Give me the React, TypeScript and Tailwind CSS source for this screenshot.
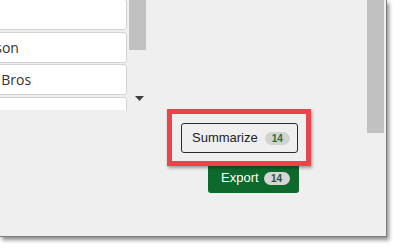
import React from 'react';

const rows = ['', 'Thompson', 'Warner Bros', ''];

export default function App() {
  return (
    <div className="w-[401px] h-[252px] bg-white overflow-hidden relative font-['Liberation_Sans',Arial,sans-serif]">
      {/* Dialog panel */}
      <div className="w-[387px] h-[237px] bg-[#efefef] border-r border-b border-[#7d7d7d] shadow-[2px_3px_4px_rgba(0,0,0,0.45)] flex">
        {/* List + its scrollbar */}
        <div className="flex h-[110px] w-[150px]">
          <div className="w-[127px] h-[110px] overflow-hidden">
            <div className="-ml-[10px] -mt-[1px] flex flex-col gap-[1.5px]">
              {rows.map((r, i) => (
                <div
                  key={i}
                  className="w-[137px] h-[31px] shrink-0 bg-white border border-[#d3d3d3] rounded-[3px] flex items-center overflow-hidden"
                >
                  <span className="ml-[-42px] whitespace-nowrap text-[14px] text-[#333] font-['Open_Sans',sans-serif]">
                    {r}
                  </span>
                </div>
              ))}
            </div>
          </div>
          <div className="w-[2px]" />
          <div className="w-[17px] h-[104px] flex flex-col justify-between items-center">
            <div className="w-[17px] h-[50px] bg-[#c1c1c1]" />
            <svg width="9" height="5" viewBox="0 0 9 5" className="mb-[3px] ml-[3px]">
              <path d="M0 0 L9 0 L4.5 5 Z" fill="#404040" />
            </svg>
          </div>
        </div>

        {/* Buttons */}
        <div className="flex-1 pl-[31px] pt-[123px]">
          <div className="w-[118px] flex flex-col items-end gap-[10px]">
            <button className="w-[117px] h-[30px] mr-[1px] border border-[#2b2b2b] rounded-[3px] bg-[#efefef] flex items-center pl-[10px] text-[13px] text-[#222]">
              <span>Summarize</span>
              <span className="ml-[7px] w-[25px] h-[13px] rounded-full bg-[#cfd4cf] text-[#2f6b40] text-[10px] font-bold leading-[13px] text-center">
                14
              </span>
            </button>
            <button className="w-[91px] h-[30px] rounded-[3px] bg-[#0d6a2c] flex items-center pl-[13px] text-[13px] text-white">
              <span>Export</span>
              <span className="ml-[5px] w-[26px] h-[13px] rounded-full bg-[#d6d6d6] text-[#34503c] text-[10px] font-bold leading-[13px] text-center">
                14
              </span>
            </button>
          </div>
        </div>

        {/* Right scrollbar */}
        <div className="w-[17px] h-full mr-[2px]">
          <div className="w-[17px] h-[133px] bg-[#c1c1c1]" />
        </div>
      </div>

      {/* Highlight annotation */}
      <div className="absolute left-[167px] top-[109px] w-[144px] h-[57px] border-[5px] border-[#e8464c] shadow-[1px_2px_3px_rgba(0,0,0,0.35)]" />
    </div>
  );
}
